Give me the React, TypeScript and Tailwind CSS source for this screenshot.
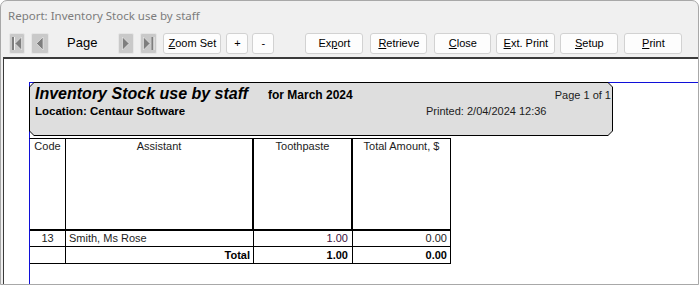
import type { ReactNode } from "react";

// Report preview window: title bar, toolbar, then the page canvas with the report.

type NavKind = "first" | "prev" | "next" | "last";

const NAV: Record<NavKind, { w: number; tri: string; bar?: number }> = {
  first: { w: 14, tri: "11.5,3 5,9.5 11.5,16", bar: 2 },
  prev: { w: 16, tri: "11,3 4.5,9.5 11,16" },
  next: { w: 14, tri: "3.5,3 10,9.5 3.5,16" },
  last: { w: 15, tri: "2.5,3 9,9.5 2.5,16", bar: 10.5 },
};

function NavButton({ kind, className }: { kind: NavKind; className: string }) {
  const n = NAV[kind];
  return (
    <div className={`h-[21px] rounded-[2px] border border-[#e6e6e6] bg-[#c9c9c9] ${className}`}>
      <svg viewBox={`0 0 ${n.w} 19`} width={n.w} height={19} className="block">
        {n.bar !== undefined && <rect x={n.bar} y="3" width="2" height="13" fill="#7e7e7e" />}
        {n.bar !== undefined && <rect x={n.bar + 2} y="3" width="1" height="13" fill="#f2f2f2" />}
        <polygon points={n.tri} fill="#7e7e7e" stroke="#f2f2f2" strokeWidth="0.6" />
      </svg>
    </div>
  );
}

function ToolButton({ children, className }: { children: ReactNode; className: string }) {
  return (
    <div
      className={`flex h-[21px] items-center justify-center rounded-[3px] border border-[#d2d2d2] bg-[#fdfdfd] text-[11px] text-black ${className}`}
    >
      {children}
    </div>
  );
}

export default function App() {
  return (
    <div className="flex h-[285px] w-[699px] flex-col overflow-hidden rounded-t-[7px] border border-[#a8a8a8] bg-[#f0f0f0] font-['Liberation_Sans',Arial,sans-serif]">
      {/* title bar */}
      <div className="flex h-[31px] items-center pl-[7px] pb-[2px] font-['Noto_Sans',sans-serif] text-[11.5px] text-[#7c7c7c]">
        Report: Inventory Stock use by staff
      </div>

      {/* toolbar */}
      <div className="flex h-[25px] items-start pt-[1px]">
        <NavButton kind="first" className="ml-[8px] w-[16px]" />
        <NavButton kind="prev" className="ml-[6px] w-[18px]" />
        <span className="ml-[18px] mt-[1px] text-[13px] leading-[17px] text-black">Page</span>
        <NavButton kind="next" className="ml-[21px] w-[16px]" />
        <NavButton kind="last" className="ml-[6px] w-[17px]" />
        <ToolButton className="ml-[6px] w-[58px]">
          <span className="underline">Z</span>oom Set
        </ToolButton>
        <ToolButton className="ml-[5px] w-[22px]">+</ToolButton>
        <ToolButton className="ml-[4px] w-[22px] border-[#8fb4dc]">-</ToolButton>
        <ToolButton className="ml-[31px] w-[58px]">
          Ex<span className="underline">p</span>ort
        </ToolButton>
        <ToolButton className="ml-[7px] w-[57px]">
          <span className="underline">R</span>etrieve
        </ToolButton>
        <ToolButton className="ml-[7px] w-[57px]">
          <span className="underline">C</span>lose
        </ToolButton>
        <ToolButton className="ml-[5px] w-[59px]">
          <span className="underline">E</span>xt. Print
        </ToolButton>
        <ToolButton className="ml-[5px] w-[58px]">
          <span className="underline">S</span>etup
        </ToolButton>
        <ToolButton className="ml-[6px] w-[58px]">
          <span className="underline">P</span>rint
        </ToolButton>
      </div>

      {/* page canvas */}
      <div className="ml-[2px] flex flex-1 flex-col border-l border-t-2 border-[#3a3a3a] bg-white pl-[25px] pt-[23px]">
        <div className="flex-1 border-l border-t border-[#1010d8] text-[#1c1c1c]">
          {/* report header */}
          <div className="-ml-px -mt-px h-[54px] w-[584px] bg-black p-px [clip-path:polygon(5px_0,calc(100%_-_5px)_0,100%_5px,100%_calc(100%_-_5px),calc(100%_-_5px)_100%,5px_100%,0_calc(100%_-_5px),0_5px)]">
            <div className="h-full w-full bg-[#dedede] pt-[2px] pl-[5px] pr-[1px] [clip-path:polygon(4px_0,calc(100%_-_4px)_0,100%_4px,100%_calc(100%_-_4px),calc(100%_-_4px)_100%,4px_100%,0_calc(100%_-_4px),0_4px)]">
              <div className="flex items-baseline">
                <span className="w-[233px] text-[16px] font-bold italic leading-[18px] text-black">
                  Inventory Stock use by staff
                </span>
                <span className="flex-1 text-[12px] font-bold text-black">for March 2024</span>
                <span className="text-[11px]">Page 1 of 1</span>
              </div>
              <div className="flex items-baseline leading-[15px]">
                <span className="w-[391px] text-[11.5px] font-bold text-black">Location: Centaur Software</span>
                <span className="text-[11px]">Printed: 2/04/2024 12:36</span>
              </div>
            </div>
          </div>

          {/* column headings */}
          <div className="-ml-px mt-[2px] flex h-[91px] text-[11px] leading-[13px]">
            <div className="w-[37px] border-x border-t border-black border-l-[#1010d8] pt-[1px] text-center">Code</div>
            <div className="w-[187px] border-r border-t border-black pt-[1px] text-center">Assistant</div>
            <div className="w-[99px] border-x border-t border-black pt-[1px] text-center">Toothpaste</div>
            <div className="w-[99px] border-x border-t border-black pt-[1px] text-center">Total Amount, $</div>
          </div>

          {/* rows */}
          <div className="-ml-px w-[422px] border-l border-[#1010d8] text-[11px]">
            <div className="flex h-[18px] items-center border-b border-t-2 border-black">
              <div className="flex h-full w-[36px] items-center justify-center border-r border-black">13</div>
              <div className="flex h-full w-[188px] items-center border-r border-black pl-[3px]">Smith, Ms Rose</div>
              <div className="flex h-full w-[99px] items-center justify-end border-r border-black pr-[4px] text-[#3a1040]">
                1.00
              </div>
              <div className="flex h-full w-[98px] items-center justify-end border-r border-black pr-[3px]">0.00</div>
            </div>
            <div className="flex h-[17px] items-center border-b border-black font-bold text-black">
              <div className="h-full w-[36px] border-r border-black" />
              <div className="flex h-full w-[188px] items-center justify-end border-r border-black pr-[3px]">Total</div>
              <div className="flex h-full w-[99px] items-center justify-end border-r border-black pr-[4px]">1.00</div>
              <div className="flex h-full w-[98px] items-center justify-end border-r border-black pr-[3px]">0.00</div>
            </div>
          </div>
        </div>
      </div>
    </div>
  );
}
